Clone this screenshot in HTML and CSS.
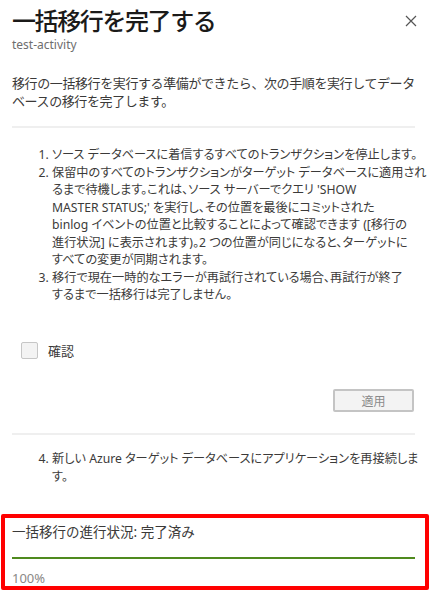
FILE: index.html
```html
<!DOCTYPE html>
<html lang="ja">
<head>
<meta charset="utf-8">
<title>一括移行を完了する</title>
<link rel="stylesheet" href="styles.css">
</head>
<body>
<div class="panel">
  <header class="header">
    <div class="titles">
      <h1 class="title">一括移行を完了する</h1>
      <div class="subtitle">test-activity</div>
    </div>
    <button class="close" aria-label="閉じる">
      <svg width="12" height="12" viewBox="0 0 12 12"><path d="M1 1 L11 11 M11 1 L1 11" stroke="#555" stroke-width="1.2" fill="none"/></svg>
    </button>
  </header>
  <p class="intro">移行の一括移行を実行する準備ができたら、次の手順を実行してデータベースの移行を完了します。</p>
  <hr class="divider divider-top">
  <ol class="steps">
    <li>ソース データベースに着信するすべてのトランザクションを停止します。</li>
    <li>保留中のすべてのトランザクションがターゲット データベースに適用され<br>るまで待機します。これは、ソース サーバーでクエリ 'SHOW<br>MASTER STATUS;' を実行し、その位置を最後にコミットされた<br>binlog イベントの位置と比較することによって確認できます ([移行の<br>進行状況] に表示されます)。2 つの位置が同じになると、ターゲットに<br>すべての変更が同期されます。</li>
    <li>移行で現在一時的なエラーが再試行されている場合、再試行が終了<br>するまで一括移行は完了しません。</li>
  </ol>
  <label class="confirm">
    <span class="checkbox"></span>
    <span class="confirm-label">確認</span>
  </label>
  <div class="actions">
    <button class="apply" disabled>適用</button>
  </div>
  <hr class="divider divider-bottom">
  <ol class="steps steps-final" start="4">
    <li>新しい Azure ターゲット データベースにアプリケーションを再接続しま<br>す。</li>
  </ol>
  <section class="progress">
    <div class="progress-label">一括移行の進行状況: 完了済み</div>
    <div class="progress-track"><div class="progress-fill" style="width:100%"></div></div>
    <div class="progress-value">100%</div>
  </section>
</div>
</body>
</html>
```

FILE: styles.css
```css
* { box-sizing: border-box; }
html, body { margin: 0; padding: 0; background: #fff; }
body {
  font-family: "Noto Sans", "Noto Sans CJK JP", sans-serif;
  color: #323130;
  width: 433px;
  height: 608px;
  overflow: hidden;
}
.panel {
  padding: 5px 18px 0 12px;
  display: flex;
  flex-direction: column;
}
.header {
  display: flex;
  justify-content: space-between;
  align-items: flex-start;
}
.title {
  margin: 0;
  font-family: "Noto Sans CJK JP", sans-serif;
  font-size: 24px;
  font-weight: 500;
  letter-spacing: -1.4px;
  line-height: 30px;
  color: #1b1a19;
}
.subtitle {
  margin-top: 2px;
  font-size: 12px;
  line-height: 16px;
  color: #6e6e6e;
}
.close {
  border: 0;
  background: none;
  padding: 0;
  margin: 10px -2px 0 0;
  width: 12px;
  height: 12px;
  display: flex;
}
.intro {
  margin: 21px 0 0;
  font-size: 13px;
  letter-spacing: -0.4px;
  line-height: 18px;
  color: #3b3a39;
}
.divider {
  border: 0;
  height: 2px;
  background: #efefef;
  margin: 0;
}
.divider-top { margin-top: 16px; }
.steps {
  margin: 18px -8px 0 0;
  padding-left: 40px;
  font-size: 12.2px;
  font-feature-settings: "palt";
  line-height: 17.5px;
  color: #3b3a39;
  white-space: nowrap;
}
.confirm {
  margin-top: 38px;
  margin-left: 9px;
  display: flex;
  align-items: center;
  gap: 10px;
}
.checkbox {
  width: 17px;
  height: 17px;
  border: 1px solid #c6c6c6;
  border-radius: 2px;
  background: #f3f3f3;
}
.confirm-label {
  font-size: 13px;
  line-height: 18px;
  color: #3b3a39;
}
.actions {
  margin-top: 29px;
  display: flex;
  justify-content: flex-end;
  padding-right: 1px;
}
.apply {
  width: 81px;
  height: 23px;
  border: 2px solid #c4c4c4;
  border-radius: 2px;
  background: #f3f3f3;
  color: #8a8a8a;
  font-family: "Noto Sans CJK JP", sans-serif;
  font-size: 12px;
  padding: 0;
}
.divider-bottom { margin-top: 21px; }
.steps-final { margin-top: 15px; line-height: 18px; }
.progress {
  margin: 28px -14px 0 -11px;
  border: 4px solid #ff0000;
  border-radius: 2px;
  padding: 6px 10px 0 7px;
  height: 76px;
}
.progress-label {
  font-size: 13.5px;
  line-height: 17px;
  color: #3b3a39;
}
.progress-track {
  margin-top: 16px;
  height: 2px;
  background: #e5e5e5;
}
.progress-fill {
  height: 100%;
  background: #4f8a1e;
}
.progress-value {
  margin-top: 12px;
  font-size: 13px;
  line-height: 14px;
  color: #8a8886;
}
```
